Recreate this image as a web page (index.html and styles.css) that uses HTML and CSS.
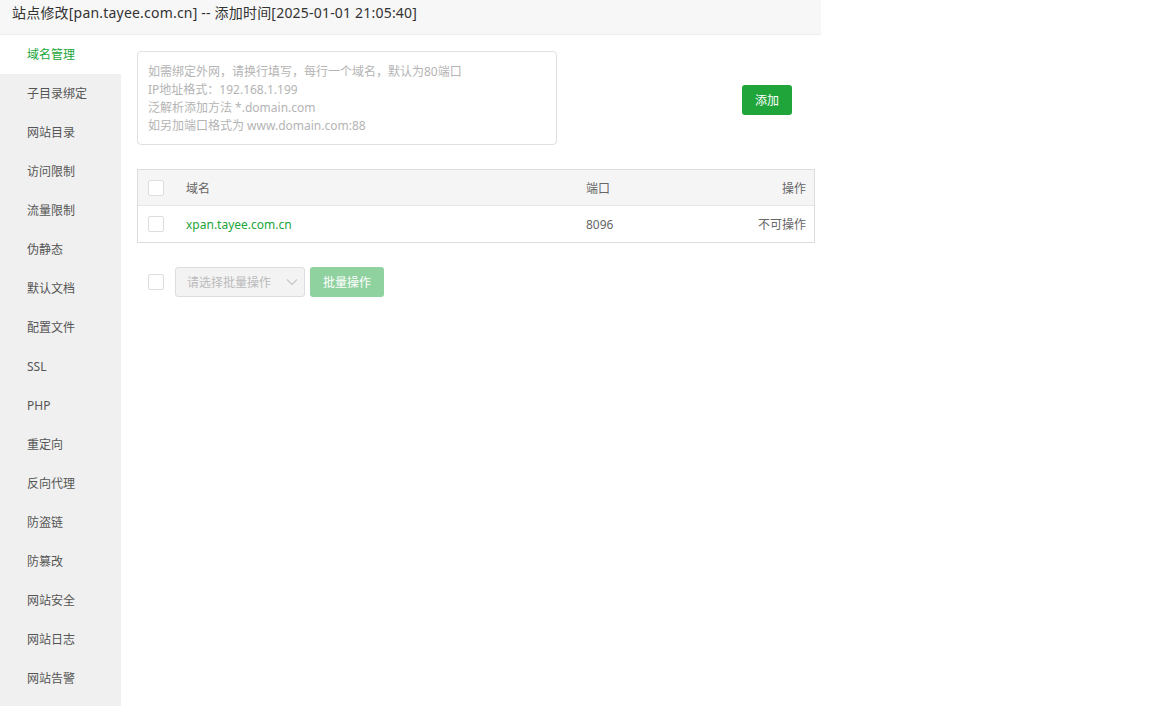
FILE: index.html
```html
<!DOCTYPE html>
<html lang="zh-CN">
<head>
<meta charset="utf-8">
<title>站点修改</title>
<link rel="stylesheet" href="styles.css">
</head>
<body>
<div class="panel">
  <div class="title">站点修改[pan.tayee.com.cn] -- 添加时间[2025-01-01 21:05:40]</div>
  <div class="body">
    <ul class="menu">
      <li class="active">域名管理</li>
      <li>子目录绑定</li>
      <li>网站目录</li>
      <li>访问限制</li>
      <li>流量限制</li>
      <li>伪静态</li>
      <li>默认文档</li>
      <li>配置文件</li>
      <li>SSL</li>
      <li>PHP</li>
      <li>重定向</li>
      <li>反向代理</li>
      <li>防盗链</li>
      <li>防篡改</li>
      <li>网站安全</li>
      <li>网站日志</li>
      <li>网站告警</li>
    </ul>
    <div class="content">
      <div class="add-row">
        <div class="textarea">
          <div>如需绑定外网，请换行填写，每行一个域名，默认为80端口</div>
          <div>IP地址格式：192.168.1.199</div>
          <div>泛解析添加方法 *.domain.com</div>
          <div>如另加端口格式为 www.domain.com:88</div>
        </div>
        <button class="btn-add">添加</button>
      </div>
      <div class="table">
        <div class="tr th">
          <div class="c-check"><span class="checkbox"></span></div>
          <div class="c-name">域名</div>
          <div class="c-port">端口</div>
          <div class="c-op">操作</div>
        </div>
        <div class="tr">
          <div class="c-check"><span class="checkbox"></span></div>
          <div class="c-name link">xpan.tayee.com.cn</div>
          <div class="c-port">8096</div>
          <div class="c-op">不可操作</div>
        </div>
      </div>
      <div class="batch">
        <span class="checkbox"></span>
        <div class="select">
          <span>请选择批量操作</span>
          <svg class="chev" width="12" height="8" viewBox="0 0 12 8"><path d="M1 1.5 L6 6.5 L11 1.5" fill="none" stroke="#c8c8c8" stroke-width="1.2"/></svg>
        </div>
        <button class="btn-batch">批量操作</button>
      </div>
    </div>
  </div>
</div>
</body>
</html>
```
FILE: styles.css
```css
* { box-sizing: border-box; }
html, body { margin: 0; padding: 0; background: #fff; }
body {
  font-family: "Noto Sans", "Noto Sans CJK SC", sans-serif;
  font-size: 12px;
  color: #555;
  height: 706px;
  overflow: hidden;
}
.panel { width: 821px; height: 706px; display: flex; flex-direction: column; }
.title {
  height: 35px;
  background: #f7f7f7;
  border-bottom: 1px solid #eee;
  padding: 0 12px;
  font-size: 14px;
  line-height: 26px;
  letter-spacing: 0.2px;
  color: #333;
}
.body { flex: 1; display: flex; }
.menu {
  list-style: none;
  margin: 0;
  padding: 0;
  width: 121px;
  background: #f0f0f0;
}
.menu li {
  height: 39px;
  line-height: 39px;
  padding-left: 27px;
  color: #555;
  font-size: 12px;
}
.menu li.active { background: #fff; color: #20a53a; }
.content { flex: 1; padding: 16px 6px 0 16px; }
.add-row { display: flex; align-items: center; height: 94px; }
.textarea {
  width: 420px;
  height: 94px;
  border: 1px solid #e0e0e0;
  border-radius: 4px;
  padding: 11px 10px;
  color: #b4b4b4;
  font-size: 12px;
  line-height: 18px;
}
.btn-add {
  margin-left: 185px;
  margin-top: 4px;
  width: 50px;
  height: 30px;
  background: #20a53a;
  color: #fff;
  border: 0;
  border-radius: 3px;
  font-family: inherit;
  font-size: 12px;
  padding: 0;
}
.table {
  margin-top: 24px;
  width: 678px;
  border: 1px solid #ddd;
}
.tr { display: flex; align-items: center; height: 36px; color: #666; }
.tr.th { background: #f5f5f5; border-bottom: 1px solid #e6e6e6; height: 36px; }
.c-check { width: 48px; padding-left: 10px; display: flex; align-items: center; }
.c-name { width: 400px; }
.c-port { flex: 1; }
.c-op { width: 120px; text-align: right; padding-right: 8px; }
.link { color: #20a53a; }
.checkbox {
  display: inline-block;
  width: 16px;
  height: 16px;
  border: 1px solid #ddd;
  border-radius: 2px;
  background: #fff;
}
.batch { display: flex; align-items: center; margin-top: 24px; padding-left: 11px; height: 30px; }
.select {
  margin-left: 11px;
  width: 130px;
  height: 30px;
  background: #f3f3f3;
  border: 1px solid #ddd;
  border-radius: 3px;
  color: #bbb;
  display: flex;
  align-items: center;
  justify-content: space-between;
  padding: 0 6px 0 11px;
}
.chev { display: block; }
.btn-batch {
  margin-left: 5px;
  width: 74px;
  height: 30px;
  background: #90d1a0;
  color: #fff;
  border: 0;
  border-radius: 3px;
  font-family: inherit;
  font-size: 12px;
  padding: 0;
}
```
